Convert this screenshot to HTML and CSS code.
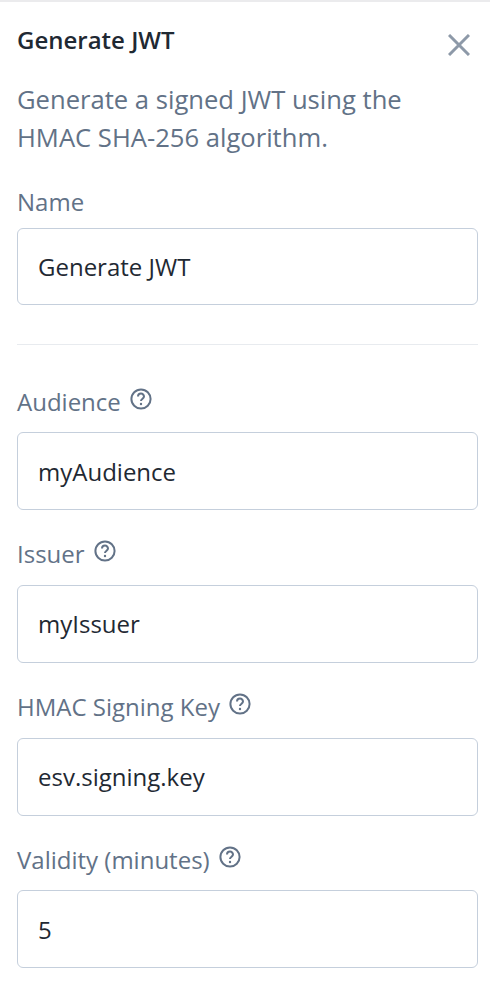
FILE: index.html
```html
<!DOCTYPE html>
<html lang="en">
<head>
<meta charset="utf-8">
<title>Generate JWT</title>
<link rel="stylesheet" href="styles.css">
</head>
<body>
<div class="panel">
  <header class="head">
    <h1 class="title">Generate JWT</h1>
    <svg class="close" viewBox="0 0 22 22" width="22" height="22" aria-label="Close"><path d="M1 1L21 21M21 1L1 21"/></svg>
  </header>
  <p class="desc">Generate a signed JWT using the HMAC SHA-256 algorithm.</p>
  <div class="field first">
    <label class="label">Name</label>
    <div class="input">Generate JWT</div>
  </div>
  <hr class="rule">
  <div class="field tip">
    <label class="label">Audience<svg class="help" viewBox="0 0 22 22" width="22" height="22"><circle cx="11" cy="11" r="9.6"/><path d="M8 8.6a3 3 0 0 1 6 0c0 2-3 2.2-3 4.4"/><circle class="dot" cx="11" cy="16" r="1.2"/></svg></label>
    <div class="input">myAudience</div>
  </div>
  <div class="field tip">
    <label class="label">Issuer<svg class="help" viewBox="0 0 22 22" width="22" height="22"><circle cx="11" cy="11" r="9.6"/><path d="M8 8.6a3 3 0 0 1 6 0c0 2-3 2.2-3 4.4"/><circle class="dot" cx="11" cy="16" r="1.2"/></svg></label>
    <div class="input">myIssuer</div>
  </div>
  <div class="field tip">
    <label class="label">HMAC Signing Key<svg class="help" viewBox="0 0 22 22" width="22" height="22"><circle cx="11" cy="11" r="9.6"/><path d="M8 8.6a3 3 0 0 1 6 0c0 2-3 2.2-3 4.4"/><circle class="dot" cx="11" cy="16" r="1.2"/></svg></label>
    <div class="input">esv.signing.key</div>
  </div>
  <div class="field tip">
    <label class="label">Validity (minutes)<svg class="help" viewBox="0 0 22 22" width="22" height="22"><circle cx="11" cy="11" r="9.6"/><path d="M8 8.6a3 3 0 0 1 6 0c0 2-3 2.2-3 4.4"/><circle class="dot" cx="11" cy="16" r="1.2"/></svg></label>
    <div class="input">5</div>
  </div>
</div>
</body>
</html>
```
FILE: styles.css
```css
* { box-sizing: border-box; }
html, body { margin: 0; padding: 0; background: #fff; }
body { font-family: "Open Sans", sans-serif; height: 984px; overflow: hidden; }
.panel { padding: 22px 12px 0 17px; border-top: 2px solid #ebebed; width: 490px; }
.head { display: flex; justify-content: space-between; align-items: flex-start; }
.title { margin: 0; font-size: 24px; line-height: 32px; font-weight: 600; color: #1f2933; }
.close { margin-top: 10px; margin-right: 8px; fill: none; stroke: #8d99a8; stroke-width: 3; }
.desc { margin: 25px 0 0; width: 440px; font-size: 25.6px; line-height: 38px; color: #627287; }
.field { margin-top: 24.75px; }
.first { margin-top: 25px; }
.label { display: flex; align-items: center; gap: 9px; height: 38px; font-size: 24px; color: #627287; }
.input { margin-top: 8px; width: 461px; height: 77px; border: 1px solid #c5cfdc; border-radius: 6px; padding-left: 20px; display: flex; align-items: center; font-size: 24px; color: #1f2933; }
.tip .input { margin-top: 12px; height: 78px; }
.rule { border: 0; border-top: 1px solid #e8ebef; width: 461px; margin: 39px 0 37px; }
.help { fill: none; stroke: #627287; stroke-width: 2; margin-bottom: 5px; }
.help .dot { fill: #627287; stroke: none; }
```
